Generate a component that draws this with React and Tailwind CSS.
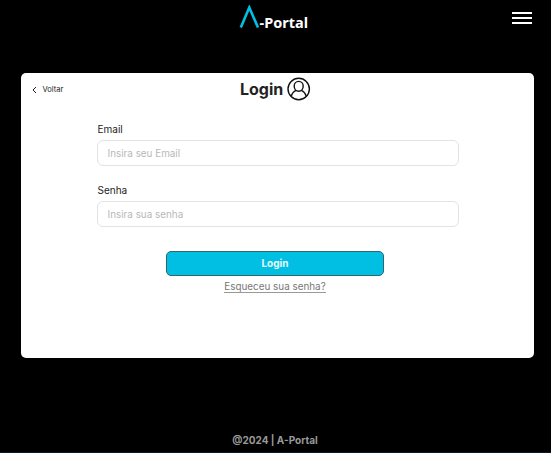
function Field({ id, label, type, placeholder }) {
  return (
    <div className="flex flex-col">
      <label htmlFor={id} className="h-[14px] pl-[0.5px] text-[10px] leading-[14px] text-[#222]">{label}</label>
      <input
        id={id}
        type={type}
        placeholder={placeholder}
        className="mt-[4px] h-[26px] w-[362px] rounded-[6px] border border-[#e3e3e3] bg-white px-[9.5px] text-[9.9px] text-[#222] outline-none placeholder:text-[#b8b8b8]"
      />
    </div>
  );
}

function UserIcon() {
  return (
    <svg className="size-[24px] shrink-0" viewBox="0 0 24 24" fill="none" stroke="#111" strokeWidth="1.4">
      <circle cx="11.7" cy="12" r="10.7" />
      <ellipse cx="11.7" cy="9.3" rx="4.5" ry="4.9" />
      <path d="M4.2 19.4c.8-3 2.500-5 4.900-6M19.200 19.400c-.8-3-2.500-5-4.900-6" />
    </svg>
  );
}

export default function App() {
  return (
    <div className="flex h-[453px] w-[551px] flex-col overflow-hidden border-b border-[#06182c] bg-black font-['Inter',sans-serif]">
      <header className="grid h-[73px] shrink-0 grid-cols-[239px_1fr_20px] items-start pr-[19px]">
        <div className="col-start-2 flex pt-[5px]">
          <svg className="h-[24px] w-[21px] shrink-0" viewBox="0 0 21 24" fill="none" stroke="#00bfe3" strokeWidth="2.6">
            <path d="M1.8 22.6 10.3 2.5 19 22.6" strokeLinejoin="miter" />
          </svg>
          <span className="mt-[7px] ml-[-0.5px] font-['Noto_Sans',sans-serif] text-[14.5px] leading-[20px] font-bold text-white">-Portal</span>
        </div>
        <button aria-label="Menu" className="mt-[12px] flex w-[20px] flex-col gap-[3px]">
          <span className="h-[2px] w-full bg-white" />
          <span className="h-[2px] w-full bg-white" />
          <span className="h-[2px] w-full bg-white" />
        </button>
      </header>
      <main className="ml-[21px] flex h-[285px] w-[513.4px] shrink-0 flex-col rounded-[5px] bg-white">
        <div className="grid h-[33px] grid-cols-[219px_1fr] items-center">
          <button className="flex items-center gap-[6px] pl-[10.5px] text-[7.5px] leading-[10px] text-[#222]">
            <svg className="h-[8px] w-[5px]" viewBox="0 0 5 8" fill="none" stroke="#222" strokeWidth="1">
              <path d="M4 1 1 4l3 3" />
            </svg>
            Voltar
          </button>
          <div className="-mt-[1px] flex items-center gap-[4px]">
            <h1 className="text-[16px] leading-[20px] font-bold text-[#222]">Login</h1>
            <UserIcon />
          </div>
        </div>
        <form className="ml-[76px] flex flex-col gap-[17px] pt-[16px]">
          <Field id="email" label="Email" type="text" placeholder="Insira seu Email" />
          <Field id="senha" label="Senha" type="password" placeholder="Insira sua senha" />
        </form>
        <div className="mt-[24px] ml-[145px] flex w-[218px] flex-col items-center">
          <button className="h-[25px] w-full rounded-[5px] border border-[#326570] bg-[#00bfe3] text-[10px] font-bold text-white/90">Login</button>
          <a className="mt-[5px] border-b border-[#999] text-[9.9px] leading-[11px] text-[#777]">Esqueceu sua senha?</a>
        </div>
      </main>
      <footer className="mt-[75px] pr-[1px] text-center text-[10px] leading-[14px] font-bold text-[#999]">@2024 | A-Portal</footer>
    </div>
  );
}
